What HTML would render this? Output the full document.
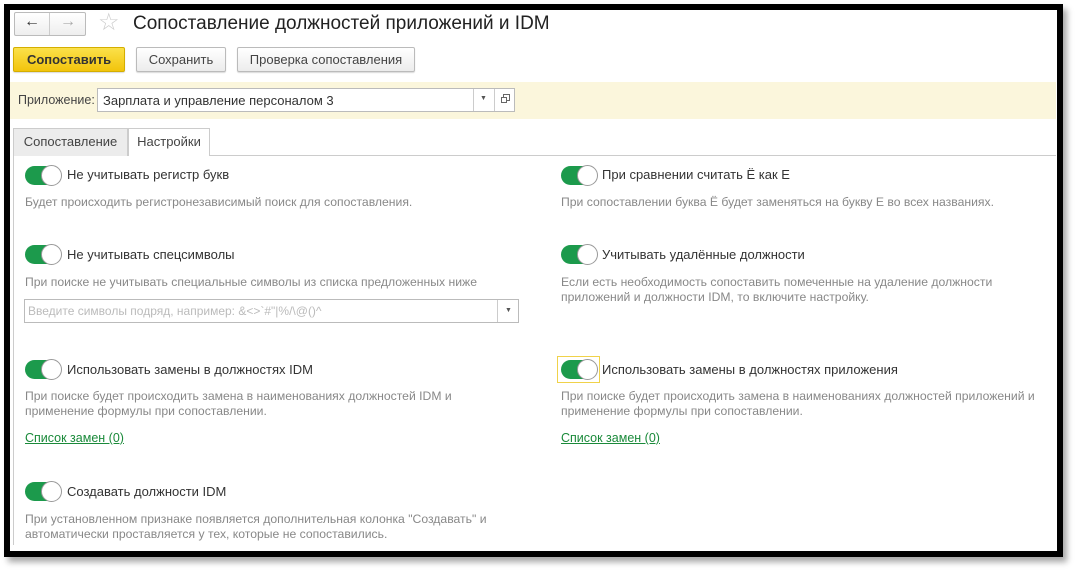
<!DOCTYPE html>
<html><head><meta charset="utf-8"><style>
*{margin:0;padding:0;box-sizing:border-box}
body{width:1077px;height:572px;background:#fff;position:relative;overflow:hidden;font-family:"Liberation Sans",Arial,sans-serif;color:#333}
.a{position:absolute;white-space:nowrap}
.frame{position:absolute;left:4px;top:4px;width:1059px;height:553px;border:6px solid #000;box-shadow:4px 5px 6px rgba(0,0,0,.35);z-index:5}
.btn{position:absolute;top:47px;height:25px;border:1px solid #bbb;border-radius:2px;background:linear-gradient(#fff,#ececec);font-size:13px;line-height:23px;text-align:center;color:#444;box-shadow:0 1px 1px rgba(0,0,0,.15)}
.tg{position:absolute;width:36px;height:19px;border-radius:10px;background:#1c9a4c}
.tg:after{content:"";position:absolute;right:-1px;top:-1px;width:19px;height:19px;border-radius:50%;background:#fff;border:1px solid #999}
.lb{font-size:13px;color:#333}
.ds{font-size:12.2px;color:#888}
.lk{font-size:12.5px;color:#1a8a3a;text-decoration:underline}
</style></head><body>
<div class="frame"></div>
<div class="a" style="left:14px;top:12px;width:72px;height:24px;border:1px solid #bbb;border-radius:2px;background:linear-gradient(#fff,#eee)"></div>
<div class="a" style="left:49px;top:13px;width:1px;height:22px;background:#ccc"></div>
<div class="a" style="left:24px;top:13px;font-size:16px;color:#333">&#8592;</div>
<div class="a" style="left:60px;top:13px;font-size:16px;color:#aaa">&#8594;</div>
<div class="a" style="left:98px;top:8px;font-size:24px;color:#ccc">&#9734;</div>
<div class="a" style="left:133px;top:13px;font-size:19px;color:#222">Сопоставление должностей приложений и IDM</div>
<div class="btn" style="left:13px;width:112px;background:linear-gradient(#fbe14a,#f2c40c);border-color:#d4ae00;color:#333;font-weight:bold">Сопоставить</div>
<div class="btn" style="left:136px;width:90px">Сохранить</div>
<div class="btn" style="left:237px;width:178px">Проверка сопоставления</div>
<div class="a" style="left:10px;top:82px;width:1046px;height:37px;background:#fbf6dc"></div>
<div class="a" style="left:18px;top:93px;font-size:12.5px;color:#444">Приложение:</div>
<div class="a" style="left:97px;top:88px;width:418px;height:24px;border:1px solid #bbb;background:#fff"></div>
<div class="a" style="left:103px;top:93px;font-size:13px;color:#333">Зарплата и управление персоналом 3</div>
<div class="a" style="left:473px;top:89px;width:1px;height:22px;background:#ccc"></div>
<div class="a" style="left:494px;top:89px;width:1px;height:22px;background:#ccc"></div>
<div class="a" style="left:480px;top:95px;font-size:7px;color:#555">&#9660;</div>
<div class="a" style="left:503px;top:94px;width:7px;height:7px;border:1px solid #666"></div>
<div class="a" style="left:501px;top:97px;width:6px;height:6px;border:1px solid #666;background:#fff"></div>
<div class="a" style="left:13px;top:128px;width:115px;height:28px;background:#ececec;border:1px solid #ccc;border-bottom:none;font-size:13px;line-height:26px;text-align:center;color:#444">Сопоставление</div>
<div class="a" style="left:128px;top:128px;width:82px;height:28px;background:#fff;border:1px solid #ccc;border-bottom:none;font-size:13px;line-height:26px;text-align:center;color:#444">Настройки</div>
<div class="a" style="left:210px;top:155px;width:846px;height:1px;background:#ccc"></div>
<div class="a" style="left:13px;top:155px;width:1px;height:390px;background:#ccc"></div>

<div class="tg" style="left:25px;top:166px"></div>
<div class="a lb" style="left:67px;top:167px">Не учитывать регистр букв</div>
<div class="a ds" style="left:25px;top:195px">Будет происходить регистронезависимый поиск для сопоставления.</div>
<div class="tg" style="left:561px;top:166px"></div>
<div class="a lb" style="left:602px;top:167px">При сравнении считать Ё как Е</div>
<div class="a ds" style="left:561px;top:195px">При сопоставлении буква Ё будет заменяться на букву Е во всех названиях.</div>

<div class="tg" style="left:25px;top:245px"></div>
<div class="a lb" style="left:67px;top:247px">Не учитывать спецсимволы</div>
<div class="a ds" style="left:25px;top:275px">При поиске не учитывать специальные символы из списка предложенных ниже</div>
<div class="a" style="left:24px;top:299px;width:495px;height:24px;border:1px solid #bbb;background:#fff"></div>
<div class="a" style="left:497px;top:300px;width:1px;height:22px;background:#ccc"></div>
<div class="a" style="left:505px;top:307px;font-size:7px;color:#555">&#9660;</div>
<div class="a" style="left:28px;top:304px;font-size:12px;color:#bbb">Введите символы подряд, например: &amp;&lt;&gt;`#"|%/\@()^</div>
<div class="tg" style="left:561px;top:245px"></div>
<div class="a lb" style="left:602px;top:247px">Учитывать удалённые должности</div>
<div class="a ds" style="left:561px;top:275px;line-height:15px">Если есть необходимость сопоставить помеченные на удаление должности<br>приложений и должности IDM, то включите настройку.</div>

<div class="tg" style="left:25px;top:360px"></div>
<div class="a lb" style="left:67px;top:362px">Использовать замены в должностях IDM</div>
<div class="a ds" style="left:25px;top:389px;line-height:15px">При поиске будет происходить замена в наименованиях должностей IDM и<br>применение формулы при сопоставлении.</div>
<div class="a lk" style="left:25px;top:431px">Список замен (0)</div>
<div class="a" style="left:557px;top:356px;width:43px;height:27px;border:1px solid #f0d24a"></div>
<div class="tg" style="left:561px;top:360px"></div>
<div class="a lb" style="left:602px;top:362px">Использовать замены в должностях приложения</div>
<div class="a ds" style="left:561px;top:389px;line-height:15px">При поиске будет происходить замена в наименованиях должностей приложений и<br>применение формулы при сопоставлении.</div>
<div class="a lk" style="left:561px;top:431px">Список замен (0)</div>

<div class="tg" style="left:25px;top:482px"></div>
<div class="a lb" style="left:67px;top:484px">Создавать должности IDM</div>
<div class="a ds" style="left:25px;top:512px;line-height:15px">При установленном признаке появляется дополнительная колонка "Создавать" и<br>автоматически проставляется у тех, которые не сопоставились.</div>
</body></html>
